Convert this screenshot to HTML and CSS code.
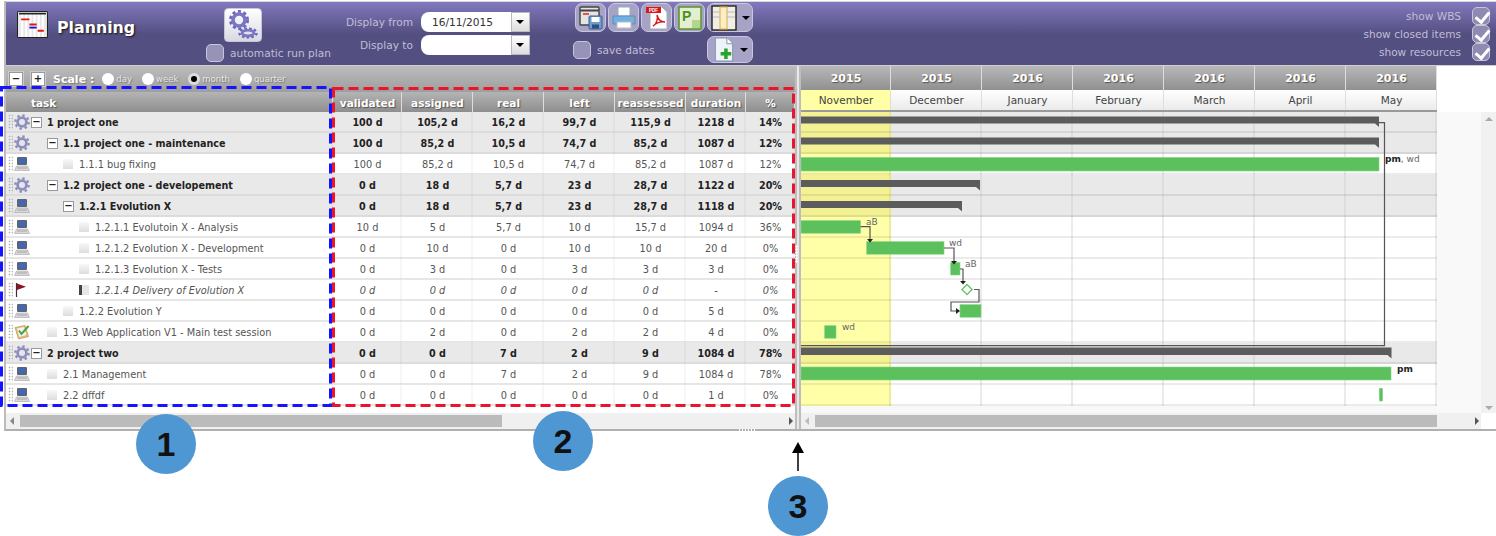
FILE: index.html
```html
<!DOCTYPE html>
<html lang="en">
<head>
  <meta charset="UTF-8">
  <title>Planning</title>
  <link rel="stylesheet" href="styles.css">
</head>
<body>
  <svg class="defs" width="0" height="0">
    <symbol id="i-gear" viewBox="0 0 16 16">
      <circle cx="8" cy="8" r="6.6" fill="none" stroke="#8c8cba" stroke-width="2.4" stroke-dasharray="2.4 2.8"/>
      <circle cx="8" cy="8" r="4.4" fill="none" stroke="#8f8fbc" stroke-width="2.8"/>
      <circle cx="8" cy="8" r="2.2" fill="#e4e4f0"/>
    </symbol>
    <symbol id="i-pc" viewBox="0 0 16 16">
      <rect x="3" y="1" width="10" height="8" rx="1" fill="#5f6470"/>
      <rect x="4.5" y="2.3" width="7" height="5" fill="#3f68b8"/>
      <path d="M2.5 10h11l2 4.5H.5z" fill="#d8d8d8" stroke="#a5a5a5" stroke-width=".6"/>
      <path d="M3 12h10" stroke="#999" stroke-width=".8"/>
    </symbol>
    <symbol id="i-flag" viewBox="0 0 16 16">
      <path d="M2.5 1v14" stroke="#333" stroke-width="1.2"/>
      <path d="M3 1.5l9 3.3-9 3.2z" fill="#8f1420"/>
    </symbol>
    <symbol id="i-test" viewBox="0 0 16 16">
      <path d="M1 3.5l10-2 3.5 11-10 2.5z" fill="#e8b878" stroke="#b98a4c" stroke-width=".6"/>
      <path d="M3 4.5l7-1.4 2.3 8-7 1.8z" fill="#eef4fa"/>
      <path d="M5 6.5l2.5 3.5L14.5 2" fill="none" stroke="#4aa53a" stroke-width="2"/>
    </symbol>
    <symbol id="i-gears" viewBox="0 0 32 32">
      <circle cx="12" cy="11" r="8.6" fill="none" stroke="#6a66b8" stroke-width="2.8" stroke-dasharray="3 2.6"/>
      <circle cx="12" cy="11" r="6" fill="none" stroke="#7a76c4" stroke-width="3.6"/>
      <ellipse cx="21" cy="24" rx="8.6" ry="4.4" fill="none" stroke="#6a66b8" stroke-width="2.4" stroke-dasharray="2.6 2"/>
      <ellipse cx="21" cy="24" rx="6" ry="2.8" fill="none" stroke="#7a76c4" stroke-width="2.6"/>
    </symbol>
    <symbol id="i-plan" viewBox="0 0 30 26">
      <rect x=".5" y=".5" width="29" height="25" rx="1" fill="#e8e8e8" stroke="#222"/>
      <path d="M5 2v23M9 2v23M13 2v23M17 2v23M21 2v23M25 2v23" stroke="#fff" stroke-width="2"/>
      <path d="M2 2.5h26" stroke="#222" stroke-width="1.6"/>
      <path d="M4 8h8M12 13h7M20 19h6" stroke="#e01818" stroke-width="1.8"/>
      <path d="M12 16h7" stroke="#1818d0" stroke-width="1.8"/>
    </symbol>
    <symbol id="i-save" viewBox="0 0 26 26">
      <rect x="2" y="2" width="19" height="18" rx="1" fill="#e4e4e4" stroke="#444" stroke-width="1.4"/>
      <path d="M2 5.5h19" stroke="#444" stroke-width="2"/>
      <path d="M5 9h6" stroke="#e03030" stroke-width="1.6"/>
      <rect x="11" y="11" width="13" height="13" rx="1" fill="#6f9bd0" stroke="#3b5f90"/>
      <rect x="13.5" y="12" width="8" height="5" fill="#fff"/>
      <rect x="14" y="19.5" width="7" height="4" fill="#2f4f7c"/>
    </symbol>
    <symbol id="i-print" viewBox="0 0 26 26">
      <rect x="7" y="2" width="12" height="9" fill="#fff" stroke="#9ab"/>
      <path d="M2 11h22v8H2z" fill="#6fb1e4" stroke="#5a8fb8"/>
      <rect x="6" y="17" width="14" height="6" fill="#fff" stroke="#bbb"/>
      <circle cx="21" cy="14" r="1" fill="#e8a030"/>
    </symbol>
    <symbol id="i-columns" viewBox="0 0 26 26">
      <rect x="1" y="1" width="24" height="24" fill="#f0efe6" stroke="#222" stroke-width="1.4"/>
      <rect x="9" y="2" width="7" height="22" fill="#fbeec6" stroke="#dfa93a"/>
      <path d="M2 7h7M16 7h8M2 12h7M16 12h8" stroke="#bbb"/>
    </symbol>
    <symbol id="i-new" viewBox="0 0 22 26">
      <path d="M2 1h12l6 6v18H2z" fill="#eef3fa" stroke="#7f93ad"/>
      <path d="M14 1v6h6" fill="#fff" stroke="#7f93ad"/>
      <path d="M13 12v11M7.500 17.500h11" stroke="#27a327" stroke-width="3.600"/>
    </symbol>
  </svg>

  <div class="app">
    <header class="top">
      <svg class="logo"><use href="#i-plan"/></svg>
      <h1 class="title">Planning</h1>

      <div class="run-block">
        <button class="gears-btn"><svg class="gears-ic"><use href="#i-gears"/></svg></button>
        <label class="check-row"><span class="check"></span>automatic run plan</label>
      </div>

      <div class="dates">
        <div class="date-row">
          <label class="date-label">Display from</label>
          <span class="date-input">16/11/2015</span>
          <span class="date-drop"></span>
        </div>
        <div class="date-row">
          <label class="date-label">Display to</label>
          <span class="date-input"></span>
          <span class="date-drop"></span>
        </div>
      </div>

      <div class="tools">
        <div class="tool-row">
          <button class="tool"><svg class="tool-ic"><use href="#i-save"/></svg></button>
          <button class="tool"><svg class="tool-ic"><use href="#i-print"/></svg></button>
          <button class="tool">
            <svg class="tool-ic" viewBox="0 0 26 26">
              <path d="M6 2h12l5 5v17H6z" fill="#fff" stroke="#aaa"/>
              <rect x="2" y="2" width="15" height="6" fill="#d81818"/>
              <text x="9.500" y="7" class="ic-pdf">PDF</text>
              <path d="M9 21c4-2 5-8 4-11 1 4 4 7 8 7-5-.5-9 1-12 4z" fill="none" stroke="#d81818" stroke-width="1.400"/>
            </svg>
          </button>
          <button class="tool">
            <svg class="tool-ic" viewBox="0 0 26 26">
              <rect x="2" y="2" width="22" height="22" fill="#e4efd2" stroke="#5b9a30" stroke-width="1.600"/>
              <rect x="15" y="15" width="8" height="8" fill="#b5d58e"/>
              <text x="5" y="16" class="ic-proj">P</text>
            </svg>
          </button>
          <button class="tool wide"><svg class="tool-ic"><use href="#i-columns"/></svg><span class="caret"></span></button>
        </div>
        <div class="tool-row second">
          <label class="check-row"><span class="check"></span>save dates</label>
          <button class="tool wide add"><svg class="tool-ic"><use href="#i-new"/></svg><span class="caret"></span></button>
        </div>
      </div>

      <div class="options">
        <label class="option">show WBS<span class="check on"></span></label>
        <label class="option">show closed items<span class="check on"></span></label>
        <label class="option">show resources<span class="check on"></span></label>
      </div>
    </header>

    <div class="panes">
      <section class="pane-left">
        <div class="scale">
          <span class="box raised">&minus;</span>
          <span class="box raised">+</span>
          <strong class="scale-title">Scale :</strong>
          <label class="radio"><span class="dot"></span>day</label>
          <label class="radio"><span class="dot"></span>week</label>
          <label class="radio"><span class="dot on"></span>month</label>
          <label class="radio"><span class="dot"></span>quarter</label>
        </div>

        <div class="grid head">
          <span class="head-task">task</span><span>validated</span><span>assigned</span><span>real</span><span>left</span><span>reassessed</span><span>duration</span><span>%</span>
        </div>

        <div class="grid row group">
          <span class="task"><i class="grip"></i><svg class="ic"><use href="#i-gear"/></svg><b class="box l0">&minus;</b>1 project one</span>
          <span>100 d</span><span>105,2 d</span><span>16,2 d</span><span>99,7 d</span><span>115,9 d</span><span>1218 d</span><span>14%</span>
        </div>
        <div class="grid row group">
          <span class="task"><i class="grip"></i><svg class="ic"><use href="#i-gear"/></svg><b class="box l1">&minus;</b>1.1 project one - maintenance</span>
          <span>100 d</span><span>85,2 d</span><span>10,5 d</span><span>74,7 d</span><span>85,2 d</span><span>1087 d</span><span>12%</span>
        </div>
        <div class="grid row">
          <span class="task"><i class="grip"></i><svg class="ic"><use href="#i-pc"/></svg><b class="leaf l2"></b>1.1.1 bug fixing</span>
          <span>100 d</span><span>85,2 d</span><span>10,5 d</span><span>74,7 d</span><span>85,2 d</span><span>1087 d</span><span>12%</span>
        </div>
        <div class="grid row group">
          <span class="task"><i class="grip"></i><svg class="ic"><use href="#i-gear"/></svg><b class="box l1">&minus;</b>1.2 project one - developement</span>
          <span>0 d</span><span>18 d</span><span>5,7 d</span><span>23 d</span><span>28,7 d</span><span>1122 d</span><span>20%</span>
        </div>
        <div class="grid row group">
          <span class="task"><i class="grip"></i><svg class="ic"><use href="#i-pc"/></svg><b class="box l2">&minus;</b>1.2.1 Evolution X</span>
          <span>0 d</span><span>18 d</span><span>5,7 d</span><span>23 d</span><span>28,7 d</span><span>1118 d</span><span>20%</span>
        </div>
        <div class="grid row">
          <span class="task"><i class="grip"></i><svg class="ic"><use href="#i-pc"/></svg><b class="leaf l3"></b>1.2.1.1 Evolutoin X - Analysis</span>
          <span>10 d</span><span>5 d</span><span>5,7 d</span><span>10 d</span><span>15,7 d</span><span>1094 d</span><span>36%</span>
        </div>
        <div class="grid row">
          <span class="task"><i class="grip"></i><svg class="ic"><use href="#i-pc"/></svg><b class="leaf l3"></b>1.2.1.2 Evolution X - Development</span>
          <span>0 d</span><span>10 d</span><span>0 d</span><span>10 d</span><span>10 d</span><span>20 d</span><span>0%</span>
        </div>
        <div class="grid row">
          <span class="task"><i class="grip"></i><svg class="ic"><use href="#i-pc"/></svg><b class="leaf l3"></b>1.2.1.3 Evolution X - Tests</span>
          <span>0 d</span><span>3 d</span><span>0 d</span><span>3 d</span><span>3 d</span><span>3 d</span><span>0%</span>
        </div>
        <div class="grid row milestone">
          <span class="task"><i class="grip"></i><svg class="ic"><use href="#i-flag"/></svg><b class="leaf l3 flagged"></b>1.2.1.4 Delivery of Evolution X</span>
          <span>0 d</span><span>0 d</span><span>0 d</span><span>0 d</span><span>0 d</span><span>-</span><span>0%</span>
        </div>
        <div class="grid row">
          <span class="task"><i class="grip"></i><svg class="ic"><use href="#i-pc"/></svg><b class="leaf l2"></b>1.2.2 Evolution Y</span>
          <span>0 d</span><span>0 d</span><span>0 d</span><span>0 d</span><span>0 d</span><span>5 d</span><span>0%</span>
        </div>
        <div class="grid row">
          <span class="task"><i class="grip"></i><svg class="ic"><use href="#i-test"/></svg><b class="leaf l1"></b>1.3 Web Application V1 - Main test session</span>
          <span>0 d</span><span>2 d</span><span>0 d</span><span>2 d</span><span>2 d</span><span>4 d</span><span>0%</span>
        </div>
        <div class="grid row group">
          <span class="task"><i class="grip"></i><svg class="ic"><use href="#i-gear"/></svg><b class="box l0">&minus;</b>2 project two</span>
          <span>0 d</span><span>0 d</span><span>7 d</span><span>2 d</span><span>9 d</span><span>1084 d</span><span>78%</span>
        </div>
        <div class="grid row">
          <span class="task"><i class="grip"></i><svg class="ic"><use href="#i-pc"/></svg><b class="leaf l1"></b>2.1 Management</span>
          <span>0 d</span><span>0 d</span><span>7 d</span><span>2 d</span><span>9 d</span><span>1084 d</span><span>78%</span>
        </div>
        <div class="grid row">
          <span class="task"><i class="grip"></i><svg class="ic"><use href="#i-pc"/></svg><b class="leaf l1"></b>2.2 dffdf</span>
          <span>0 d</span><span>0 d</span><span>0 d</span><span>0 d</span><span>0 d</span><span>1 d</span><span>0%</span>
        </div>

        <div class="hscroll hscroll-left">
          <span class="arrow left"></span>
          <span class="thumb thumb-left"></span>
          <span class="arrow right"></span>
        </div>
      </section>

      <div class="splitter"></div>

      <section class="pane-right">
        <div class="gantt-head">
          <div class="years">
            <span>2015</span><span>2015</span><span>2016</span><span>2016</span><span>2016</span><span>2016</span><span>2016</span>
          </div>
          <div class="months">
            <span class="now">November</span><span>December</span><span>January</span><span>February</span><span>March</span><span>April</span><span>May</span>
          </div>
        </div>

        <div class="gantt-body">
          <div class="canvas">
            <div class="g-row group"></div>
            <div class="g-row group"></div>
            <div class="g-row"></div>
            <div class="g-row group"></div>
            <div class="g-row group"></div>
            <div class="g-row"></div>
            <div class="g-row"></div>
            <div class="g-row"></div>
            <div class="g-row"></div>
            <div class="g-row"></div>
            <div class="g-row"></div>
            <div class="g-row group"></div>
            <div class="g-row"></div>
            <div class="g-row"></div>

            <svg class="bars" width="636" height="294">
              <!-- group bars -->
              <path class="bar-group" d="M0 4.500H578V15L574 11.500H0z"/>
              <path class="bar-group" d="M0 25.500H578V36L574 32.500H0z"/>
              <path class="bar-group" d="M0 68H179V78.500L175 75H0z"/>
              <path class="bar-group" d="M0 89H161V99.500L157 96H0z"/>
              <path class="bar-group" d="M0 235.500H590.500V246.500L586.500 243H0z"/>
              <!-- tasks -->
              <rect class="bar" x="0" y="45.500" width="578" height="13.500"/>
              <rect class="bar" x="0" y="108.700" width="59.500" height="12.500"/>
              <rect class="bar" x="65.700" y="129.700" width="77.300" height="12.500"/>
              <rect class="bar" x="149.700" y="150.500" width="9.300" height="12.500"/>
              <rect class="bar" x="159" y="192.700" width="21" height="12.500"/>
              <rect class="bar" x="23.700" y="213.700" width="11.300" height="12.500"/>
              <rect class="bar" x="0" y="255" width="590" height="13"/>
              <rect class="bar" x="578.300" y="276.300" width="3.300" height="12.700"/>
              <path class="diamond" d="M166 172.500L171 177.500 166 182.500 161 177.500z"/>
              <!-- links -->
              <path class="link" d="M577 10.700H583.500V233.700H0"/>
              <path class="link" d="M59.500 114.700H69V127"/>
              <path class="link" d="M143 136H153V149"/>
              <path class="link" d="M159 157H162V169"/>
              <path class="link" d="M173 177.500H178V190H150V199H155"/>
              <path class="link-head" d="M66 127H72L69 130.500z"/>
              <path class="link-head" d="M150 149H156L153 152.500z"/>
              <path class="link-head" d="M159 169H165L162 172.500z"/>
              <path class="link-head" d="M155 196V202L159 199z"/>
              <!-- resources -->
              <text class="res" x="65" y="112.500">aB</text>
              <text class="res" x="148" y="133.500">wd</text>
              <text class="res" x="164" y="154.500">aB</text>
              <text class="res" x="41" y="217.500">wd</text>
              <text class="res" x="584" y="49.500"><tspan class="res-main">pm</tspan>, wd</text>
              <text class="res" x="596" y="260"><tspan class="res-main">pm</tspan></text>
            </svg>
          </div>
          <div class="gutter"></div>
          <div class="vscroll">
            <span class="arrow up"></span>
            <span class="arrow down"></span>
          </div>
        </div>

        <div class="hscroll hscroll-right">
          <span class="arrow left pale"></span>
          <span class="thumb thumb-right"></span>
          <span class="arrow right"></span>
        </div>
      </section>
    </div>
  </div>

  <!-- annotations drawn on top of the screenshot -->
  <svg class="marks" width="1496" height="536">
    <rect class="mark-blue" x="1.500" y="87.500" width="329" height="318"/>
    <rect class="mark-red" x="333.500" y="88.500" width="460" height="317"/>
    <path class="mark-arrow" d="M798 471V450"/>
    <path class="mark-head" d="M792 453H804L798 442z"/>
  </svg>
  <span class="callout c1">1</span>
  <span class="callout c2">2</span>
  <span class="callout c3">3</span>
</body>
</html>
```

FILE: styles.css
```css
* {
  box-sizing: border-box;
}

html, body {
  margin: 0;
  height: 536px;
  overflow: hidden;
  background: #fff;
}

body {
  position: relative;
  font-family: "DejaVu Sans", Verdana, sans-serif;
  font-size: 9.800px;
  color: #555;
}

.defs {
  position: absolute;
}

.ic-pdf {
  font: bold 4.500px "Liberation Sans", sans-serif;
  fill: #fff;
  text-anchor: middle;
}

.ic-proj {
  font: bold 14px "Liberation Sans", sans-serif;
  fill: #4f8f26;
}

.app {
  width: 1492px;
  height: 430px;
  margin: 1px 0 0 4px;
  border-left: 2px solid #bdbdbd;
  border-bottom: 2px solid #b0b0b0;
}

/* header */
.top {
  display: flex;
  height: 65px;
  border-top: 1px solid #d5d5e0;
  border-bottom: 1px solid #d0d0d0;
  background: linear-gradient(#8179bd, #544f81 32px);
  color: #c0bed6;
  font-size: 10.600px;
}

.logo {
  width: 31px;
  height: 27px;
  margin: 9px 0 0 11px;
  flex: none;
}

.title {
  width: 149px;
  margin: 15px 0 0 9px;
  font-size: 15.800px;
  line-height: 22px;
  font-weight: bold;
  color: #fff;
  text-shadow: 1px 1px 2px #111;
  flex: none;
}

.run-block {
  width: 137px;
  flex: none;
}

.gears-btn {
  display: block;
  width: 38px;
  height: 34px;
  padding: 0;
  margin: 6px 0 0 18px;
  border: 1px solid #c7c5dc;
  border-radius: 4px;
  background: linear-gradient(#fff, #d9d9e4);
}

.gears-ic {
  display: block;
  width: 32px;
  height: 32px;
  margin: 0 2px;
}

.check-row {
  display: flex;
  align-items: center;
  gap: 6px;
  height: 18px;
  margin-top: 2px;
  white-space: nowrap;
}

.check {
  display: block;
  flex: none;
  width: 18px;
  height: 18px;
  border: 1px solid #c8c6dc;
  border-radius: 5px;
  background: #9692b8;
}

.check.on {
  position: relative;
  background: #8e8bb2;
}

.check.on::after {
  content: "";
  position: absolute;
  left: 5px;
  top: 1px;
  width: 6px;
  height: 11px;
  border: solid #fff;
  border-width: 0 3px 3px 0;
  transform: rotate(40deg);
}

.dates {
  width: 232px;
  padding-top: 10px;
  flex: none;
}

.date-row {
  display: flex;
  align-items: center;
  height: 20px;
  margin-bottom: 3px;
}

.date-label {
  width: 70px;
  margin-right: 8px;
  text-align: right;
}

.date-input {
  width: 90px;
  height: 20px;
  padding-left: 11px;
  border-radius: 8px 0 0 8px;
  background: #fff;
  color: #333;
  line-height: 20px;
}

.date-drop {
  position: relative;
  width: 19px;
  height: 20px;
  border: 1px solid #bbb;
  background: linear-gradient(#fff, #ddd);
}

.date-drop::after, .caret {
  content: "";
  border-top: 4px solid #000;
  border-left: 4px solid transparent;
  border-right: 4px solid transparent;
}

.date-drop::after {
  position: absolute;
  left: 4px;
  top: 7px;
}

.tools {
  width: 178px;
  padding-top: 1px;
  flex: none;
}

.tool-row {
  display: flex;
  gap: 2px;
}

.tool-row.second {
  justify-content: space-between;
  align-items: center;
  margin-top: 4px;
}

.tool-row.second .check-row {
  margin: 0 0 0 -2px;
}

.tool {
  display: flex;
  align-items: center;
  justify-content: center;
  width: 31px;
  height: 29px;
  padding: 0;
  border: 1px solid #c9c7de;
  border-radius: 7px;
  background: #a6a3c6;
}

.tool.wide {
  width: 46px;
  gap: 5px;
}

.tool.add {
  height: 27px;
}

.tool-ic {
  width: 26px;
  height: 26px;
  flex: none;
}

.tool.add .tool-ic {
  width: 22px;
  height: 25px;
}

.options {
  flex: 1;
  padding: 5px 6px 0 0;
}

.option {
  display: flex;
  justify-content: flex-end;
  align-items: center;
  gap: 11px;
  height: 18px;
}

/* panes */
.panes {
  display: flex;
  height: 363px;
}

.pane-left {
  width: 789px;
  flex: none;
}

.splitter {
  position: relative;
  width: 6px;
  flex: none;
  border-left: 2px solid #bdbdbd;
  border-right: 2px solid #bdbdbd;
  background: #e8e8e8;
}

.splitter::after {
  content: "";
  position: absolute;
  left: -2px;
  top: 179px;
  width: 3px;
  height: 18px;
  background: radial-gradient(circle, #fff 45%, transparent 55%) 0 0 / 3px 3px;
}

.pane-right {
  flex: 1;
  min-width: 0;
}

.scale {
  display: flex;
  align-items: center;
  height: 26px;
  padding-left: 3px;
  background: linear-gradient(#bcbcbc, #9e9e9e);
  color: #e6e6e6;
  font-size: 8.500px;
  text-shadow: 1px 1px 1px #777;
}

.box {
  display: flex;
  align-items: center;
  justify-content: center;
  flex: none;
  width: 11px;
  height: 11px;
  border: 1px solid #999;
  background: #fff;
  color: #222;
  font-size: 10px;
  font-weight: bold;
  line-height: 1;
  text-shadow: none;
}

.box.raised {
  margin-right: 8px;
  width: 14px;
  height: 14px;
  box-shadow: 0 0 0 1px #ccc;
}

.scale-title {
  margin: 0 8px 0 0;
  color: #fff;
  font-size: 11px;
}

.radio {
  display: flex;
  align-items: center;
  gap: 2px;
  margin-right: 10px;
}

.dot {
  display: block;
  width: 12px;
  height: 12px;
  border-radius: 50%;
  background: #fff;
}

.dot.on {
  border: 3px solid #ddd;
  background: #000;
}

.grid {
  display: grid;
  grid-template-columns: 327px 69px 71px 71px 71px 71px 60px 49px;
}

.grid > span {
  display: flex;
  align-items: center;
  justify-content: center;
  white-space: nowrap;
  box-shadow: inset -2px 0 0 rgba(0, 0, 0, .03);
}

.head {
  height: 20px;
  background: linear-gradient(#b4b4b4, #8e8e8e);
  color: #fff;
  font-size: 10.500px;
  font-weight: bold;
  text-shadow: 1px 1px 1px #555;
}

.grid.head > span {
  padding-top: 2px;
  box-shadow: inset -1px 0 0 #ddd;
}

.grid > .head-task {
  justify-content: flex-start;
  padding-left: 25px;
}

.row {
  height: 21px;
  background: #fff;
  box-shadow: inset 0 -2px 0 #e6e6e6;
  padding-bottom: 1px;
}

.row.group {
  background: #e9e9e9;
  color: #222;
  font-size: 9.600px;
  font-weight: bold;
  box-shadow: inset 0 -2px 0 #dcdcdc;
}

.row.milestone {
  font-style: italic;
}

.grid > .task {
  justify-content: flex-start;
  padding-left: 2px;
}

.grip {
  width: 5px;
  height: 16px;
  margin-right: 1px;
  background: radial-gradient(circle, #b5b5b5 40%, transparent 50%) 0 0 / 3px 3px;
  flex: none;
}

.ic {
  width: 16px;
  height: 16px;
  flex: none;
}

.leaf {
  display: block;
  flex: none;
  width: 10px;
  height: 10px;
  margin-right: 6px;
  background: linear-gradient(#f8f8f8, #ddd);
}

.leaf.flagged {
  background: #e6e6e6;
  border-left: 3px solid #444;
}

.box.l0, .box.l1, .box.l2 {
  margin-right: 5px;
}

.l0 { margin-left: 1px; }
.l1 { margin-left: 17px; }
.l2 { margin-left: 33px; }
.l3 { margin-left: 49px; }

.hscroll {
  position: relative;
  display: flex;
  align-items: center;
  height: 16px;
  background: #f0f0f0;
  padding: 0 2px 0 14px;
}

.hscroll-left {
  margin-top: 7px;
}

/* resize handle on the bottom border */
.hscroll-left::after {
  content: "";
  position: absolute;
  left: 732px;
  bottom: -2px;
  width: 18px;
  height: 2px;
  background: radial-gradient(circle, #fff 45%, transparent 55%) 0 0 / 3px 2px;
}

.thumb {
  display: block;
  height: 12px;
  background: #bbb;
}

.thumb-left {
  width: 482px;
}

.arrow {
  display: block;
  width: 0;
  height: 0;
  position: absolute;
  border: 4px solid transparent;
}

.arrow.left {
  left: 4px;
  top: 4px;
  border-left-width: 0;
  border-right-color: #888;
}

.arrow.left.pale {
  border-right-color: #bbb;
}

.arrow.right {
  right: 2px;
  top: 4px;
  border-right-width: 0;
  border-left-color: #555;
}

/* gantt */
.years, .months {
  display: grid;
  grid-template-columns: 90px repeat(6, 91px);
  width: 636px;
  text-align: center;
}

.years {
  height: 24px;
  background: linear-gradient(#b8b8b8, #909090);
  color: #fff;
  font-size: 11px;
  font-weight: bold;
  line-height: 26px;
  text-shadow: 1px 1px 1px #555;
}

.years span {
  box-shadow: inset -1px 0 0 #ddd;
}

.months {
  height: 22px;
  border-bottom: 2px solid #999;
  background: linear-gradient(#fff, #ebebeb);
  color: #444;
  font-size: 10.500px;
  line-height: 20px;
}

.months span {
  box-shadow: inset -1px 0 0 #ddd;
}

.months .now {
  background: #ffffa5;
}

.gantt-body {
  display: flex;
  height: 301px;
}

.canvas {
  position: relative;
  width: 636px;
  flex: none;
  background: #f8f8f8;
}

.g-row {
  height: 21px;
  background:
    repeating-linear-gradient(90deg, transparent 0 88.500px, rgba(0, 0, 0, .08) 88.500px 90.500px, transparent 90.500px 91px),
    linear-gradient(#ffffa8, #ffffa8) 0 0 / 90px 100% repeat-y,
    #fff;
  box-shadow: inset 0 -2px 0 rgba(0, 0, 0, .08);
}

.g-row.group {
  background:
    repeating-linear-gradient(90deg, transparent 0 88.500px, rgba(0, 0, 0, .05) 88.500px 90.500px, transparent 90.500px 91px),
    linear-gradient(#f3f193, #f3f193) 0 0 / 90px 100% repeat-y,
    #e9e9e9;
}

.bars {
  position: absolute;
  left: 0;
  top: 0;
  overflow: visible;
}

.bar {
  fill: #5cc05c;
  stroke: #7fd67f;
  stroke-width: .6;
}

.bar-group {
  fill: #5c5c5c;
}

.diamond {
  fill: #fff;
  stroke: #6cc86c;
  stroke-width: 1.500;
}

.link {
  fill: none;
  stroke: #555;
  stroke-width: 1.200;
}

.link-head {
  fill: #222;
}

.res {
  font-size: 9px;
  fill: #666;
}

.res-main {
  fill: #222;
  font-weight: bold;
}

.gutter {
  width: 44px;
  flex: none;
  background: #f9f9f9;
}

.vscroll {
  position: relative;
  flex: 1;
  background: #f1f1f1;
}

.arrow.up {
  left: 4px;
  top: 5px;
  border-top-width: 0;
  border-bottom-color: #aaa;
}

.arrow.down {
  left: 4px;
  bottom: 3px;
  border-bottom-width: 0;
  border-top-color: #aaa;
}

.hscroll-right {
  width: 680px;
}

.thumb-right {
  width: 622px;
}

/* annotations */
.marks {
  position: absolute;
  left: 0;
  top: 0;
  pointer-events: none;
}

.mark-blue, .mark-red {
  fill: none;
  stroke-width: 3;
  stroke-dasharray: 10 5;
}

.mark-blue {
  stroke: #1414ff;
}

.mark-red {
  stroke: #e8152c;
}

.mark-arrow {
  stroke: #000;
  stroke-width: 1.500;
}

.mark-head {
  fill: #000;
}

.callout {
  position: absolute;
  width: 60px;
  height: 60px;
  border-radius: 50%;
  background: #4e97d3;
  color: #111;
  font: bold 34px/60px "Liberation Sans", sans-serif;
  text-align: center;
}

.c1 { left: 136px; top: 414px; }
.c2 { left: 533px; top: 411px; }
.c3 { left: 768px; top: 476px; }
```
